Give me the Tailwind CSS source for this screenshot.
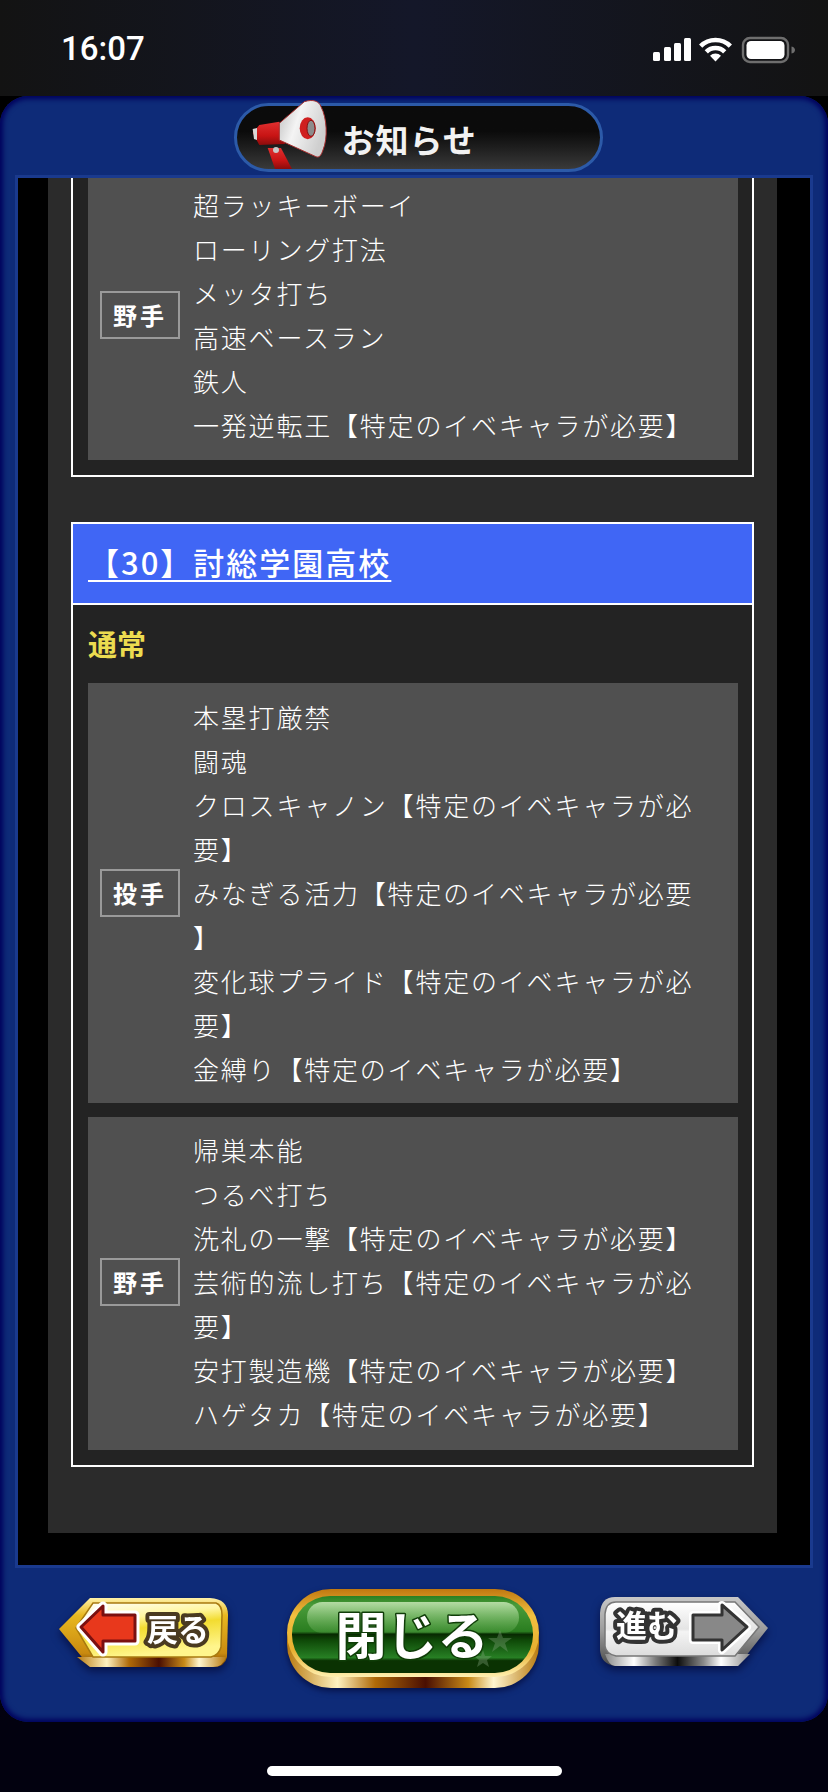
<!DOCTYPE html>
<html lang="ja">
<head>
    <meta charset="UTF-8">
    <meta name="viewport" content="width=device-width, initial-scale=1.0">
    <title>お知らせ</title>
    <script src="https://cdn.jsdelivr.net/npm/@tailwindcss/browser@4"></script>
</head>
<body class="w-[828px] h-[1792px] overflow-hidden bg-[#02010f] font-['Noto_Sans_CJK_JP','Noto_Sans',sans-serif]">
    <!-- status bar -->
    <div class="h-[96px] flex justify-between pl-[61px] pr-[32px] bg-gradient-to-r from-[#131313] via-[#141729] to-[#131313]">
        <span class="mt-[30px] h-[38px] leading-[38px] text-[33px] font-medium text-white font-['Roboto',sans-serif]">16:07</span>
        <svg class="mt-[36px]" width="144" height="28" viewBox="0 0 144 28" fill="#fff">
            <rect x="1" y="16" width="7" height="9" rx="1.5"/>
            <rect x="12" y="11" width="7" height="14" rx="1.5"/>
            <rect x="22" y="7" width="7" height="18" rx="1.5"/>
            <rect x="32" y="2" width="7" height="23" rx="1.5"/>
            <path d="M48.65 10.15A21 21 0 0 1 78.35 10.15M54.3 15.8A13 13 0 0 1 72.7 15.8" fill="none" stroke="#fff" stroke-width="4.6"/>
            <path d="M63.5 25.5L58 19.8A7.8 7.8 0 0 1 69 19.8Z"/>
            <rect x="91" y="2" width="45" height="24" rx="7" fill="none" stroke="#6e6e6e" stroke-width="2.4"/>
            <rect x="94.5" y="5" width="38" height="18" rx="4.5"/>
            <path d="M139.5 10.500C142 11 143 12.500 143 14C143 15.500 142 17 139.500 17.500Z" fill="#6e6e6e"/>
        </svg>
    </div>

    <div class="bg-gradient-to-b from-black to-[#02010f]">
        <div class="h-[1626px] flex flex-col rounded-[28px] bg-[#0e2b78] shadow-[inset_0_0_5px_3px_#00005c]">
            <!-- header -->
            <div class="h-[82px] flex justify-center pt-[7px]">
                <div class="relative ml-[8px] w-[369px] h-[69px] rounded-full border-[3px] border-[#2c5aa8] bg-gradient-to-b from-[#0b0b0b] from-40% to-[#3a3a3a] flex items-center pl-[105px]">
                    <svg class="absolute left-[12px] top-[-8px]" width="100" height="74" viewBox="0 0 100 74">
                        <defs>
                            <linearGradient id="bell" x1="0" y1="0" x2="1" y2="0.4"><stop offset="0" stop-color="#bdbdbd"/><stop offset=".45" stop-color="#f4f4f4"/><stop offset="1" stop-color="#cfcfcf"/></linearGradient>
                            <linearGradient id="red" x1="0" y1="0" x2="0" y2="1"><stop offset="0" stop-color="#e03030"/><stop offset=".6" stop-color="#c81414"/><stop offset="1" stop-color="#8a0c0c"/></linearGradient>
                        </defs>
                        <path d="M18.700 50L32 50L43 71L26 71Z" fill="url(#red)"/>
                        <circle cx="27" cy="52" r="3" fill="#c9c9c9"/>
                        <path d="M3.700 35L10.300 27L30.300 23.700L36 46L10.300 47Z" fill="url(#red)"/>
                        <path d="M3.700 31L8 30L8 42L5 41Z" fill="#d8d8d8"/>
                        <path d="M30.300 25.300L55.300 3.700C64 1 70 3 72 8.700C78 20 79 40 74 52C72 58 70 60 67 58.700L30.300 42Z" fill="url(#bell)" stroke="#a83030" stroke-width="1"/>
                        <ellipse cx="58.700" cy="30.300" rx="8" ry="11" fill="#cf1f1f"/>
                        <ellipse cx="62" cy="30.300" rx="4" ry="8" fill="#8c8c8c" stroke="#8a1010"/>
                    </svg>
                    <span class="text-[33px] leading-none font-bold text-[#f2f2f2] tracking-[1px] mt-[3px]">お知らせ</span>
                </div>
            </div>

            <!-- news body -->
            <div class="mx-[18px] h-[1387px] bg-black shadow-[0_0_0_3px_#1a3a8e] overflow-hidden">
                <div class="ml-[30px] w-[729px] h-[1355px] bg-[#2b2b2b] px-[23px] overflow-hidden text-white">
                    <div class="border-2 border-t-0 border-white bg-[#232323] pl-[15px] pr-[14px] pb-[15px]">
                        <div class="-mt-[7px] flex items-center bg-[#505050] pl-[12px] pt-[12px] pb-[13px]">
                            <div class="w-[80px] h-[48px] shrink-0 border-2 border-[#9a9a9a] flex items-center justify-center text-[24px] font-bold tracking-[3px]">野手</div>
                            <div class="ml-[13px] text-[26px] leading-[44px] tracking-[1.8px] whitespace-nowrap text-white font-light">超ラッキーボーイ<br>ローリング打法<br>メッタ打ち<br>高速ベースラン<br>鉄人<br>一発逆転王【特定のイベキャラが必要】</div>
                        </div>
                    </div>

                    <div class="mt-[45px] border-2 border-white bg-[#232323]">
                        <div class="h-[79px] bg-[#4066f5] flex items-center pl-[15px]">
                            <a class="-mt-[4px] text-[31px] leading-[40px] font-medium tracking-[2px] underline underline-offset-[5px] decoration-2">【30】討総学園高校</a>
                        </div>
                        <div class="h-[2px] bg-white"></div>
                        <div class="h-[78px] flex items-center pl-[15px] text-[29px] font-bold text-[#ecdc50]">通常</div>
                        <div class="pl-[15px] pr-[14px] pb-[15px] flex flex-col gap-[14px]">
                            <div class="flex items-center bg-[#505050] pl-[12px] py-[12px]">
                                <div class="w-[80px] h-[48px] shrink-0 border-2 border-[#9a9a9a] flex items-center justify-center text-[24px] font-bold tracking-[3px]">投手</div>
                                <div class="ml-[13px] text-[26px] leading-[44px] tracking-[1.8px] whitespace-nowrap text-white font-light">本塁打厳禁<br>闘魂<br>クロスキャノン【特定のイベキャラが必<br>要】<br>みなぎる活力【特定のイベキャラが必要<br>】<br>変化球プライド【特定のイベキャラが必<br>要】<br>金縛り【特定のイベキャラが必要】</div>
                            </div>
                            <div class="flex items-center bg-[#505050] pl-[12px] pt-[11px] pb-[14px]">
                                <div class="w-[80px] h-[48px] shrink-0 border-2 border-[#9a9a9a] flex items-center justify-center text-[24px] font-bold tracking-[3px]">野手</div>
                                <div class="ml-[13px] text-[26px] leading-[44px] tracking-[1.8px] whitespace-nowrap text-white font-light">帰巣本能<br>つるべ打ち<br>洗礼の一撃【特定のイベキャラが必要】<br>芸術的流し打ち【特定のイベキャラが必<br>要】<br>安打製造機【特定のイベキャラが必要】<br>ハゲタカ【特定のイベキャラが必要】</div>
                            </div>
                        </div>
                    </div>
                </div>
            </div>

            <!-- footer buttons -->
            <div class="flex items-start pl-[59px]">
                <!-- back -->
                <svg class="mt-[32px] shrink-0 drop-shadow-[0_4px_4px_rgba(0,0,40,0.6)]" width="169" height="72" viewBox="0 0 169 72">
                    <defs>
                        <linearGradient id="goldV" x1="0" y1="0" x2="0" y2="1"><stop offset="0" stop-color="#fff2a8"/><stop offset=".25" stop-color="#e8b820"/><stop offset=".8" stop-color="#c98a10"/><stop offset="1" stop-color="#6a3a04"/></linearGradient>
                        <linearGradient id="goldH" x1="0" y1="0" x2="1" y2="0"><stop offset="0" stop-color="#b87a10"/><stop offset=".2" stop-color="#fff2c0"/><stop offset=".35" stop-color="#b06a08"/><stop offset=".55" stop-color="#4a0e02"/><stop offset=".72" stop-color="#c88a18"/><stop offset=".82" stop-color="#fff6d0"/><stop offset="1" stop-color="#b87a10"/></linearGradient>
                        <linearGradient id="yellowFace" x1="0" y1="0" x2="0.3" y2="1"><stop offset="0" stop-color="#ffffff"/><stop offset=".35" stop-color="#fff6a0"/><stop offset=".55" stop-color="#f2dc30"/><stop offset="1" stop-color="#fff58c"/></linearGradient>
                        <linearGradient id="silverV" x1="0" y1="0" x2="0" y2="1"><stop offset="0" stop-color="#c8c8c8"/><stop offset=".5" stop-color="#9a9a9a"/><stop offset="1" stop-color="#4a4a4a"/></linearGradient>
                        <linearGradient id="silverH" x1="0" y1="0" x2="1" y2="0"><stop offset="0" stop-color="#8a8a8a"/><stop offset=".2" stop-color="#ffffff"/><stop offset=".35" stop-color="#7a7a7a"/><stop offset=".5" stop-color="#0c0c0c"/><stop offset=".68" stop-color="#8a8a8a"/><stop offset=".8" stop-color="#ffffff"/><stop offset="1" stop-color="#8a8a8a"/></linearGradient>
                        <linearGradient id="silverFace" x1="0" y1="0" x2="0" y2="1"><stop offset="0" stop-color="#ffffff"/><stop offset=".5" stop-color="#e4e4e4"/><stop offset=".55" stop-color="#f4f4f4"/><stop offset="1" stop-color="#dcdcdc"/></linearGradient>
                    </defs>
                    <path d="M0 32L31 1L151 1Q169 2 169 18L168 60Q166 70 154 70L31 70Z" fill="url(#goldV)"/>
                    <path d="M18 60L31 70L154 70Q164 70 167 60Z" fill="url(#goldH)"/>
                    <path d="M17 31L34 6L157 6Q163 8 163 18L162 50Q160 58 152 60L34 60Z" fill="url(#yellowFace)" stroke="#a87a10" stroke-width="1.500"/>
                    <path d="M22 30L44 9L44 18L76 18L76 44L44 44L44 55Z" fill="#e8381c" stroke="#fff" stroke-width="9" stroke-linejoin="round" paint-order="stroke"/>
                    <path d="M22 30L44 9L44 18L76 18L76 44L44 44L44 55Z" fill="#e8381c" stroke="#7a1010" stroke-width="3" stroke-linejoin="round"/>
                    <text x="119" y="44" text-anchor="middle" font-size="31" font-weight="700" fill="#fff" stroke="#4a3a20" stroke-width="8" stroke-linejoin="round" paint-order="stroke" font-family="'Noto Sans CJK JP',sans-serif">戻る</text>
                </svg>
                <!-- close -->
                <svg class="ml-[59px] mt-[23px] shrink-0 drop-shadow-[0_3px_3px_rgba(0,0,40,0.6)]" width="252" height="102" viewBox="0 0 252 102">
                    <defs>
                        <linearGradient id="green" x1="0" y1="0" x2="0" y2="1"><stop offset="0" stop-color="#2a7f22"/><stop offset=".12" stop-color="#4a9c3a"/><stop offset=".46" stop-color="#2a7d20"/><stop offset=".5" stop-color="#082a02"/><stop offset=".58" stop-color="#0f4a08"/><stop offset=".8" stop-color="#277f24"/><stop offset=".84" stop-color="#0a3202"/><stop offset="1" stop-color="#0a3202"/></linearGradient>
                        <linearGradient id="gloss" x1="0" y1="0" x2="0" y2="1"><stop offset="0" stop-color="#c8e8b8" stop-opacity=".85"/><stop offset="1" stop-color="#6cb45a" stop-opacity=".25"/></linearGradient>
                        <linearGradient id="rim" x1="0" y1="0" x2="0" y2="1"><stop offset="0" stop-color="#c07810"/><stop offset=".3" stop-color="#f2c040"/><stop offset=".7" stop-color="#e8b030"/><stop offset="1" stop-color="#fff0b0"/></linearGradient>
                    </defs>
                    <rect x="0" y="10" width="252" height="90" rx="44" fill="url(#goldH)"/>
                    <rect x="0" y="1" width="252" height="88" rx="44" fill="url(#rim)"/>
                    <rect x="5" y="8" width="241" height="77" rx="38" fill="url(#green)"/>
                    <rect x="20" y="14" width="212" height="31" rx="15.500" fill="url(#gloss)"/>
                    <path d="M213 42l3 8 9 0-7 5 3 9-8-6-8 6 3-9-7-5 9 0zM196 62l2 6 7 0-5 4 2 7-6-4-6 4 2-7-5-4 7 0z" fill="#8aa884" opacity=".35"/>
                    <text x="125" y="67" text-anchor="middle" font-size="51" font-weight="700" fill="#fff" stroke="#0f3d08" stroke-width="3" stroke-linejoin="round" paint-order="stroke" font-family="'Noto Sans CJK JP',sans-serif">閉じる</text>
                </svg>
                <!-- forward -->
                <svg class="ml-[60px] mt-[31px] shrink-0 drop-shadow-[0_4px_4px_rgba(0,0,40,0.6)]" width="170" height="72" viewBox="0 0 170 72">
                    <path d="M1 17Q2 1 16 1L139 1L169 32L139 70L16 70Q2 68 1 54Z" fill="url(#silverV)"/>
                    <path d="M6 58Q10 70 16 70L139 70L151 58Z" fill="url(#silverH)"/>
                    <path d="M6 18Q7 6 17 6L136 6L160 31L136 60L17 60Q7 58 6 50Z" fill="url(#silverFace)" stroke="#777" stroke-width="1.500"/>
                    <path d="M94 19L123 19L123 9L148 31L123 54L123 44L94 44Z" fill="#888" stroke="#fff" stroke-width="8" stroke-linejoin="round" paint-order="stroke"/>
                    <path d="M94 19L123 19L123 9L148 31L123 54L123 44L94 44Z" fill="#888" stroke="#333" stroke-width="3" stroke-linejoin="round"/>
                    <text x="48" y="41" text-anchor="middle" font-size="31" font-weight="700" fill="#fff" stroke="#333" stroke-width="8" stroke-linejoin="round" paint-order="stroke" font-family="'Noto Sans CJK JP',sans-serif">進む</text>
                </svg>
            </div>
        </div>
    </div>

    <!-- home indicator -->
    <div class="mt-[44px] mx-auto w-[295px] h-[10px] rounded-full bg-white"></div>
</body>
</html>
